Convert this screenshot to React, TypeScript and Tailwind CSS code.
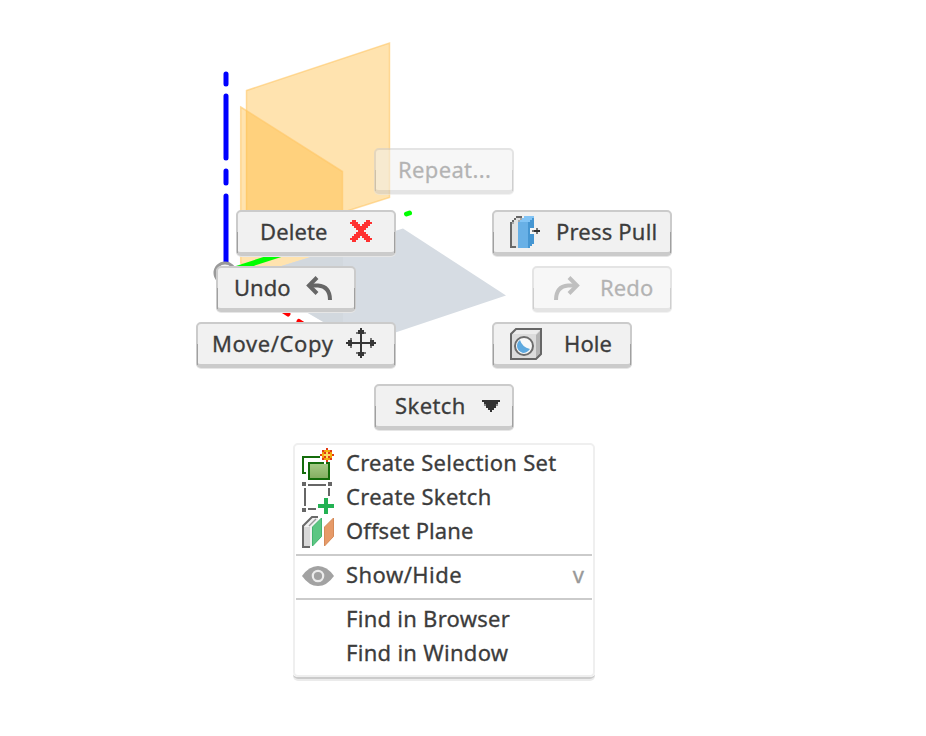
import type { ReactNode } from 'react';

const font =
  "font-['Noto_Sans','Open_Sans',sans-serif] text-[22px] leading-[34px] whitespace-pre text-[#3c3c3c] [-webkit-text-stroke:0.3px_#3c3c3c]";

function Pixels({ rows, colors, className = '' }: { rows: string[]; colors: Record<string, string>; className?: string }) {
  return (
    <svg
      width={rows[0].length * 2}
      height={rows.length * 2}
      viewBox={`0 0 ${rows[0].length} ${rows.length}`}
      shapeRendering="crispEdges"
      className={`block shrink-0 self-start ${className}`}
    >
      {rows.flatMap((r, y) =>
        r.split('').map((c, x) => (colors[c] ? <rect key={`${x}-${y}`} x={x} y={y} width={1} height={1} fill={colors[c]} /> : null)),
      )}
    </svg>
  );
}

function Plate({ className, children, faded }: { className: string; children: ReactNode; faded?: boolean }) {
  return (
    <div
      className={`relative flex h-[46px] items-center rounded-[5px] border-2 border-b-4 border-[#cbcbcb] bg-[#f1f1f1] shadow-[0_1px_0_#e6e6e6] ${faded ? 'opacity-50' : ''} ${className}`}
    >
      <span className="absolute -left-px top-[20px] h-[21px] w-px bg-[#a0a0a0]" />
      <span className="absolute -right-px top-[20px] h-[21px] w-px bg-[#a0a0a0]" />
      {children}
    </div>
  );
}

function Label({ children, className = '' }: { children: ReactNode; className?: string }) {
  return <span className={`relative -top-[1.5px] ${font} ${className}`}>{children}</span>;
}

function Scene() {
  return (
    <svg className="absolute left-0 top-0" width="926" height="736" viewBox="0 0 926 736">
      <path d="M246.500 90.500L389.500 43V197.500L246.500 243Z" fill="#ffb52e" fillOpacity=".38" stroke="#ffc766" strokeOpacity=".6" strokeWidth="1.500" />
      <path d="M240.700 107L342.500 171.500V325L240.700 263Z" fill="#ffb52e" fillOpacity=".38" stroke="#ffc766" strokeOpacity=".6" strokeWidth="1.500" />
      <path d="M246 277L403 228.500L506 295.500L361 344Z" fill="#d6dce3" />
      <path d="M246 277L343 247V333Z" fill="#d2d8de" />
      <path d="M226 272L393 218" stroke="#0f0" strokeWidth="5.500" strokeLinecap="round" />
      <path d="M406.500 214L409.500 213" stroke="#0f0" strokeWidth="5" strokeLinecap="round" />
      <path d="M226 274L288 314M299 321.500L320 335" stroke="#f00" strokeWidth="5" strokeLinecap="round" />
      <path d="M226 74V84M226 96V158M226 171V183M226 196V262" stroke="#00f" strokeWidth="5" strokeLinecap="round" />
      <circle cx="225" cy="273" r="10" fill="#f4f4f4" stroke="#999" strokeWidth="3" />
    </svg>
  );
}

const cross = [
  '.##.....##.',
  '####...####',
  '.####.####.',
  '..#######..',
  '...#####...',
  '....###....',
  '...#####...',
  '..#######..',
  '.####.####.',
  '####...####',
  '.##.....##.',
];

function TurnArrow({ className = '' }: { className?: string }) {
  return (
    <svg width="27" height="24" viewBox="0 0 27 24" fill="none" stroke="#666" strokeWidth="4" className={`mt-2 block shrink-0 self-start ${className}`}>
      <path d="M11 1.500L3 9.500L11 17.500" />
      <path d="M3 9.500H12Q24 10.500 24 24" />
    </svg>
  );
}

const move = [
  '.......#.......',
  '......###......',
  '.....a###a.....',
  '.......#.......',
  '.......#.......',
  '..a....#....a..',
  '.##....#....##.',
  '###############',
  '.##....#....##.',
  '..a....#....a..',
  '.......#.......',
  '.......#.......',
  '.....a###a.....',
  '......###......',
  '.......#.......',
];

const pressPull = [
  '...kkk.TTTTT....',
  '..kwwaTTTTTS....',
  '.kwwaTTTTTSS....',
  'kawwBBBBBSSS....',
  'kwwwBBBBBSSS....',
  'kwwwBBBBBSSS....',
  'kwwwBBBBBSWWWm..',
  'kwwwBBBBBSWmddd.',
  'kwwwBBBBBSWWWm..',
  'kwwwBBBBBSSS....',
  'kwwwBBBBBSSS....',
  'kwwwBBBBBSSS....',
  'kwwwBBBBBSSS....',
  'kwwwBBBBBSSS....',
  'kwwwBBBBBSS.....',
  'kkkwBBBBBS......',
];

const down = ['#########', '.#######.', '.a#####a.', '..#####..', '...###...', '....#....'];

const burst = ['...r...', '.r.y.r.', '..ror..', 'ryoooyr', '..ror..', '.r.y.r.', '...r...'];

function HoleIcon() {
  return (
    <svg width="32" height="32" viewBox="0 0 32 32" className="mt-1 block shrink-0 self-start">
      <path d="M1 31V6L6 1H31V26L26 31Z" fill="#dcdcdc" />
      <path d="M26 7L31 2V26L26 31Z" fill="#b4b4b4" />
      <path d="M2 6L6 2H30L26 6Z" fill="#ececec" />
      <path d="M1 31V6L6 1H31V26L26 31Z" fill="none" stroke="#666" strokeWidth="2" />
      <circle cx="14" cy="18" r="9" fill="#f8f8f8" stroke="#6c6c6c" strokeWidth="2" />
      <path d="M10 12Q12 19 20 21Q17 25 13 25Q7 23 7 18Q7 14 10 12Z" fill="#5ea9df" />
    </svg>
  );
}

function SelectionSetIcon() {
  return (
    <svg width="32" height="32" viewBox="0 0 16 16" shapeRendering="crispEdges">
      <path d="M9 4.500H.5V12.500H2" fill="none" stroke="#146c0b" />
      <defs>
        <linearGradient id="leaf" x1="0" y1="0" x2="0" y2="1">
          <stop offset="0" stopColor="#a6cc87" />
          <stop offset="1" stopColor="#83ac60" />
        </linearGradient>
      </defs>
      <rect x="3.500" y="7.500" width="10" height="8" fill="url(#leaf)" stroke="#146c0b" />
      <rect x="11" y="7" width="1" height="1" fill="#fff" />
      {burst.flatMap((r, y) =>
        r.split('').map((c, x) =>
          c === '.' ? null : (
            <rect key={`${x}-${y}`} x={9 + x} y={y} width="1" height="1" fill={c === 'r' ? '#e33a12' : c === 'y' ? '#f6b90c' : '#fbdc63'} />
          ),
        ),
      )}
      <path d="M10 2h1v1h-1zM14 2h1v1h-1zM10 4h1v1h-1zM14 4h1v1h-1zM11 1h1v1h-1zM13 1h1v1h-1zM11 5h1v1h-1zM13 5h1v1h-1z" fill="#f0a010" />
    </svg>
  );
}

function SketchIcon() {
  return (
    <svg width="32" height="32" viewBox="0 0 16 16" shapeRendering="crispEdges">
      <path d="M0 0h2v2H0zM13 0h2v2h-2zM0 13h2v2H0zM3 1h9v1H3zM1 3h1v9H1zM13 3h1v4h-1zM3 13h4v1H3z" fill="#666" />
      <path d="M11 8h2v3h3v2h-3v3h-2v-3H8v-2h3z" fill="#23b253" />
    </svg>
  );
}

function OffsetIcon() {
  return (
    <svg width="32" height="32" viewBox="0 0 32 32">
      <path d="M1 31V10L10 1H16V22L8 31Z" fill="#f2f2f2" />
      <path d="M2 30V11H8V30Z" fill="#d9d9d9" />
      <path d="M8 31H1V10L10 1H16" fill="none" stroke="#6a6a6a" strokeWidth="2" />
      <path d="M7 10L14 3" fill="none" stroke="#999" strokeWidth="1.500" />
      <path d="M10.500 11L19.500 2V20.500L10.500 30Z" fill="#5cc682" stroke="#42b46e" />
      <path d="M22.500 11L31.500 2V20.500L22.500 30Z" fill="#e69a68" stroke="#d58a58" />
    </svg>
  );
}

function EyeIcon() {
  return (
    <svg width="32" height="32" viewBox="0 0 32 32">
      <path d="M0 16Q7 6 16 6T32 16Q25 26 16 26T0 16Z" fill="#a2a2a2" />
      <circle cx="16" cy="16" r="5.200" fill="#a2a2a2" stroke="#ececec" strokeWidth="2.200" />
    </svg>
  );
}

function Row({ icon, text, spacing, children }: { icon?: ReactNode; text: string; spacing: string; children?: ReactNode }) {
  return (
    <div className="flex h-[34px] items-start pl-[7px]">
      <span className="mt-[3px] w-8 shrink-0">{icon}</span>
      <span className={`${font} ml-3 ${spacing}`}>{text}</span>
      {children}
    </div>
  );
}

export default function App() {
  return (
    <main className="relative h-[736px] w-[926px] overflow-hidden bg-white">
      <Scene />
      <div className="relative flex flex-col pt-[148px]">
        <Plate faded className="ml-[374px] w-[140px] pl-[22px]">
          <Label className="tracking-[0.35px] opacity-75">Repeat...</Label>
        </Plate>
        <div className="ml-[196px] mt-4 flex w-[476px] justify-between">
          <div className="flex w-[200px] flex-col gap-[10px]">
            <Plate className="w-[160px] self-end pl-[22px]">
              <Label className="w-[90px] tracking-[0.1px]">Delete</Label>
              <Pixels rows={cross} colors={{ '#': '#ff3130' }} className="mt-2" />
            </Plate>
            <Plate className="ml-5 w-[140px] pl-4">
              <Label className="w-[72px]">Undo</Label>
              <TurnArrow />
            </Plate>
            <Plate className="w-[200px] pl-[14px]">
              <Label className="w-[134px] tracking-[0.6px]">Move/Copy</Label>
              <Pixels rows={move} colors={{ '#': '#363636', a: '#777' }} className="mt-1" />
            </Plate>
          </div>
          <div className="flex w-[180px] flex-col gap-[10px]">
            <Plate className="w-[180px] pl-4">
              <Pixels
                rows={pressPull}
                colors={{ k: '#686868', a: '#aaa', w: '#e2e2e2', W: '#f6f6f6', B: '#68b0e6', T: '#82c4f5', S: '#4596d2', d: '#333', m: '#777' }}
                className="mt-1"
              />
              <Label className="ml-[14px] tracking-[0.2px]">Press Pull</Label>
            </Plate>
            <Plate faded className="w-[140px] self-end pl-[19px]">
              <TurnArrow className="-scale-x-100 opacity-80" />
              <Label className="ml-5 tracking-[0.1px] opacity-75">Redo</Label>
            </Plate>
            <Plate className="w-[140px] pl-4">
              <HoleIcon />
              <Label className="ml-[22px] tracking-[0.1px]">Hole</Label>
            </Plate>
          </div>
        </div>
        <Plate className="ml-[374px] mt-4 w-[140px] pl-[19px]">
          <Label className="w-[87px] tracking-[0.4px]">Sketch</Label>
          <Pixels rows={down} colors={{ '#': '#333', a: '#888' }} className="mt-[14px]" />
        </Plate>
        <div className="ml-[293px] mt-[13px] h-[236px] w-[302px] rounded-[5px] border-b-2 border-[#cbcbcb] bg-white shadow-[0_2px_0_#ebebeb]">
          <div className="h-[234px] rounded-[5px] border-2 border-[#efefef]">
            <Row icon={<SelectionSetIcon />} text="Create Selection Set" spacing="tracking-[0.26px]" />
            <Row icon={<SketchIcon />} text="Create Sketch" spacing="tracking-[0.3px]" />
            <Row icon={<OffsetIcon />} text="Offset Plane" spacing="tracking-[0.1px]" />
            <div className="mx-px mb-px mt-[7px] h-[2px] bg-[#cbcbcb]" />
            <Row icon={<EyeIcon />} text="Show/Hide" spacing="tracking-[0.45px]">
              <span className="ml-auto mr-[9px] font-['Noto_Sans',sans-serif] text-[22px] leading-[34px] text-[#999] [-webkit-text-stroke:0.3px_#999]">v</span>
            </Row>
            <div className="mx-px mb-px mt-[7px] h-[2px] bg-[#cbcbcb]" />
            <Row text="Find in Browser" spacing="tracking-[0.27px]" />
            <Row text="Find in Window" spacing="tracking-[0.29px]" />
          </div>
        </div>
      </div>
    </main>
  );
}
